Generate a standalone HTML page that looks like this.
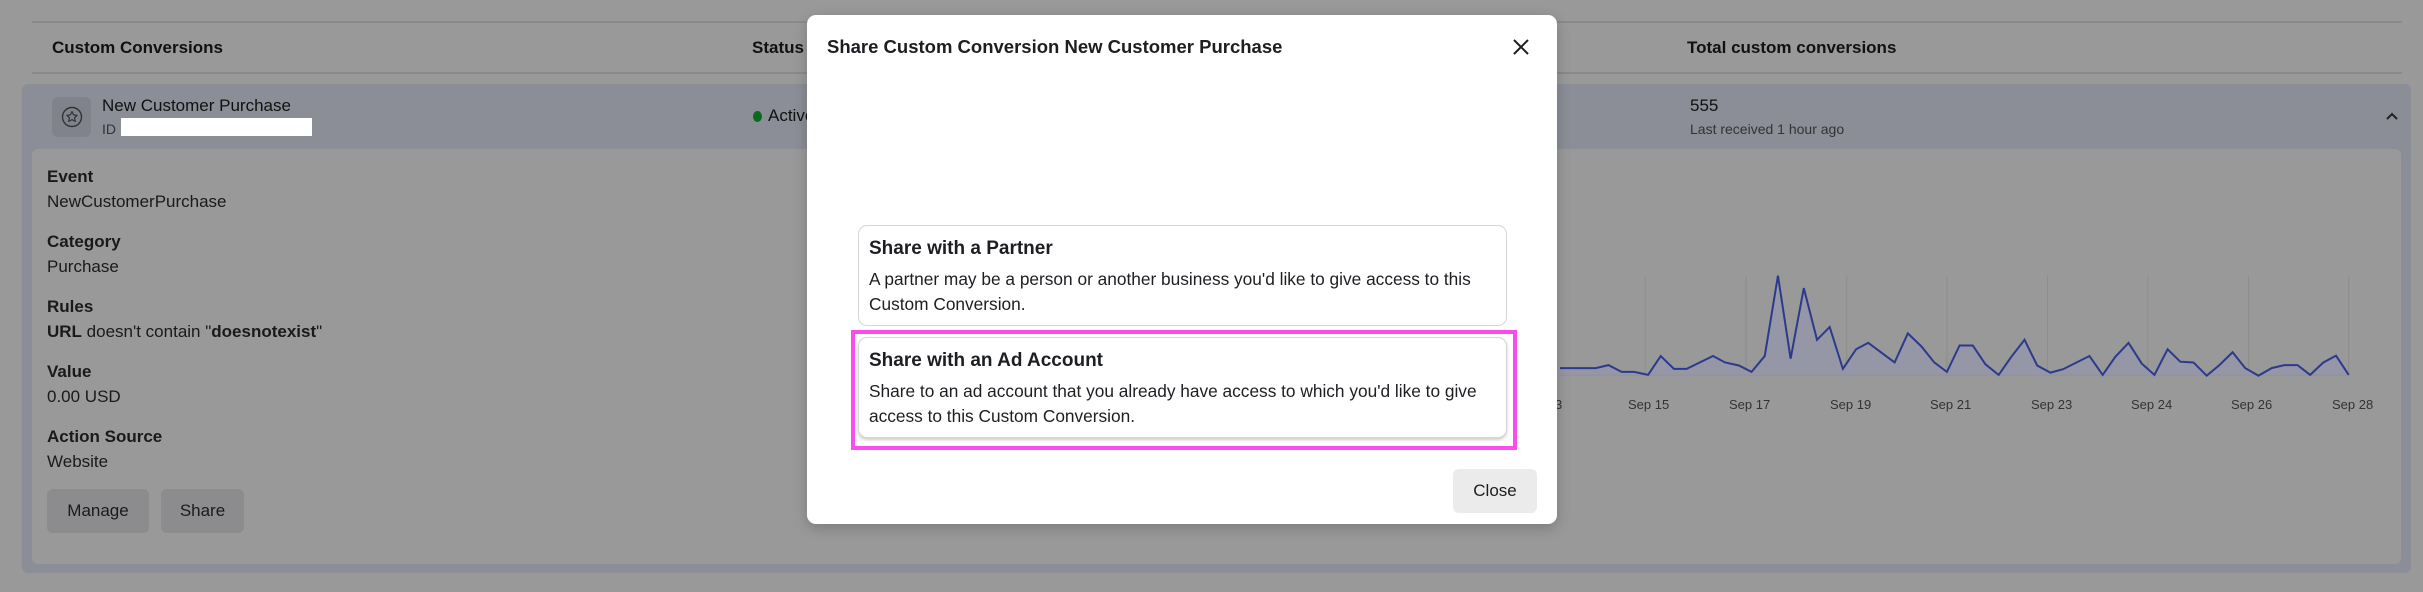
<!DOCTYPE html>
<html><head><meta charset="utf-8"><style>
*{box-sizing:border-box;margin:0;padding:0}
body{width:2423px;height:592px;background:#999;font-family:"Liberation Sans",Arial,sans-serif;position:relative;overflow:hidden;color:#111}
.a{position:absolute;white-space:nowrap}
.hl{position:absolute;left:32px;width:2370px;height:2px;background:#8a8a8a}
.th{font-weight:bold;font-size:17px;top:38px;color:#111}
.lab{font-weight:bold;font-size:17px;left:47px;color:#1a1a1a}
.val{font-size:17px;left:47px;color:#1a1a1a}
.btn{position:absolute;background:#8c8c8e;border-radius:6px;font-size:17px;text-align:center;color:#1a1a1a}
.card{position:absolute;left:858px;width:649px;height:101px;border:1px solid #d5d6d9;border-radius:9px;background:#fff;padding:0 0 0 10px}
.card h3{position:absolute;left:10px;font-size:19px;font-weight:bold;color:#1c1e21}
.card p{position:absolute;left:10px;font-size:17.3px;line-height:25px;color:#1c1e21;white-space:nowrap}
</style></head><body>
<div class="hl" style="top:21px"></div>
<div class="a th" style="left:52px">Custom Conversions</div>
<div class="a th" style="left:752px">Status</div>
<div class="a th" style="left:1687px">Total custom conversions</div>
<div class="hl" style="top:72px"></div>

<div class="a" style="left:22px;top:84px;width:2389px;height:489px;background:#8b8e97;border-radius:6px"></div>
<div class="a" style="left:32px;top:149px;width:2369px;height:415px;background:#999;border-radius:6px"></div>

<div class="a" style="left:52px;top:97px;width:39px;height:40px;background:#80838b;border-radius:6px"></div>
<svg class="a" style="left:60px;top:105px" width="24" height="24" viewBox="0 0 24 24"><circle cx="12" cy="12" r="9.5" fill="none" stroke="#333" stroke-width="1.4"/><path d="M12 6.5l1.6 3.4 3.6.4-2.7 2.5.8 3.6L12 14.6l-3.3 1.8.8-3.6-2.7-2.5 3.6-.4z" fill="none" stroke="#333" stroke-width="1.2" stroke-linejoin="round"/></svg>
<div class="a" style="left:102px;top:96px;font-size:17px">New Customer Purchase</div>
<div class="a" style="left:102px;top:121px;font-size:14px;color:#333">ID</div>
<div class="a" style="left:121px;top:118px;width:191px;height:18px;background:#fff"></div>
<div class="a" style="left:753px;top:111px;width:9px;height:11px;border-radius:50%;background:#0a6b1e"></div>
<div class="a" style="left:768px;top:106px;font-size:17px">Active</div>
<div class="a" style="left:1690px;top:96px;font-size:17px">555</div>
<div class="a" style="left:1690px;top:121px;font-size:14px;color:#333">Last received 1 hour ago</div>
<svg class="a" style="left:2385px;top:111px" width="14" height="10" viewBox="0 0 14 10"><path d="M2 8l5-5 5 5" fill="none" stroke="#222" stroke-width="2"/></svg>

<div class="a lab" style="top:167px">Event</div>
<div class="a val" style="top:192px">NewCustomerPurchase</div>
<div class="a lab" style="top:232px">Category</div>
<div class="a val" style="top:257px">Purchase</div>
<div class="a lab" style="top:297px">Rules</div>
<div class="a val" style="top:322px"><b>URL</b> doesn't contain "<b>doesnotexist</b>"</div>
<div class="a lab" style="top:362px">Value</div>
<div class="a val" style="top:387px">0.00 USD</div>
<div class="a lab" style="top:427px">Action Source</div>
<div class="a val" style="top:452px">Website</div>
<div class="btn" style="left:47px;top:489px;width:102px;height:44px;line-height:44px">Manage</div>
<div class="btn" style="left:161px;top:489px;width:83px;height:44px;line-height:44px">Share</div>

<svg class="a" style="left:1560px;top:0" width="863" height="592" viewBox="0 0 1568 1568" preserveAspectRatio="none">
<g stroke="#8d8d8d" stroke-width="1">
<line x1="155" y1="730" x2="155" y2="993" vector-effect="non-scaling-stroke"/><line x1="338" y1="730" x2="338" y2="993" vector-effect="non-scaling-stroke"/><line x1="521" y1="730" x2="521" y2="993" vector-effect="non-scaling-stroke"/><line x1="703" y1="730" x2="703" y2="993" vector-effect="non-scaling-stroke"/><line x1="886" y1="730" x2="886" y2="993" vector-effect="non-scaling-stroke"/><line x1="1068" y1="730" x2="1068" y2="993" vector-effect="non-scaling-stroke"/><line x1="1251" y1="730" x2="1251" y2="993" vector-effect="non-scaling-stroke"/><line x1="1433" y1="730" x2="1433" y2="993" vector-effect="non-scaling-stroke"/>
<line x1="0" y1="993" x2="1433" y2="993" vector-effect="non-scaling-stroke"/>
</g>
<path d="M0 975L65 975 88 967 112 985 135 985 160 993 183 943 207 977 230 977 278 943 300 960 325 968 348 985 372 943 396 730 419 950 443 763 467 900 490 866 514 977 538 925 560 908 608 960 632 883 657 918 680 960 703 985 726 915 750 915 773 965 797 993 820 945 844 900 867 968 891 987 914 978 962 943 986 993 1009 945 1033 908 1057 963 1080 993 1104 925 1127 958 1151 960 1175 995 1198 967 1222 933 1245 975 1269 995 1293 975 1316 967 1340 967 1363 993 1387 960 1410 942 1433 993L1433 993 0 993Z" fill="#9596a6" stroke="none"/>
<path d="M0 975L65 975 88 967 112 985 135 985 160 993 183 943 207 977 230 977 278 943 300 960 325 968 348 985 372 943 396 730 419 950 443 763 467 900 490 866 514 977 538 925 560 908 608 960 632 883 657 918 680 960 703 985 726 915 750 915 773 965 797 993 820 945 844 900 867 968 891 987 914 978 962 943 986 993 1009 945 1033 908 1057 963 1080 993 1104 925 1127 958 1151 960 1175 995 1198 967 1222 933 1245 975 1269 995 1293 975 1316 967 1340 967 1363 993 1387 960 1410 942 1433 993" fill="none" stroke="#2c3a8c" stroke-width="2" vector-effect="non-scaling-stroke"/>
</svg>
<div class="a" style="top:397px;left:1555px;font-size:13px;color:#333">3</div>
<div class="a" style="top:397px;left:1628px;font-size:13px;color:#333">Sep 15</div>
<div class="a" style="top:397px;left:1729px;font-size:13px;color:#333">Sep 17</div>
<div class="a" style="top:397px;left:1830px;font-size:13px;color:#333">Sep 19</div>
<div class="a" style="top:397px;left:1930px;font-size:13px;color:#333">Sep 21</div>
<div class="a" style="top:397px;left:2031px;font-size:13px;color:#333">Sep 23</div>
<div class="a" style="top:397px;left:2131px;font-size:13px;color:#333">Sep 24</div>
<div class="a" style="top:397px;left:2231px;font-size:13px;color:#333">Sep 26</div>
<div class="a" style="top:397px;left:2332px;font-size:13px;color:#333">Sep 28</div>

<div class="a" style="left:807px;top:15px;width:750px;height:509px;background:#fff;border-radius:9px;box-shadow:0 4px 14px rgba(0,0,0,.2)"></div>
<div class="a" style="left:827px;top:36px;font-size:18.5px;font-weight:bold;color:#1c1e21">Share Custom Conversion New Customer Purchase</div>
<svg class="a" style="left:1512px;top:38px" width="18" height="18" viewBox="0 0 18 18"><path d="M2 2l14 14M16 2L2 16" stroke="#1c1e21" stroke-width="2"/></svg>

<div class="card" style="top:225px"><h3 style="top:12px">Share with a Partner</h3><p style="top:41px">A partner may be a person or another business you'd like to give access to this<br>Custom Conversion.</p></div>
<div class="a" style="left:851px;top:330px;width:666px;height:120px;border:4px solid #fb4cf0"></div>
<div class="card" style="top:337px;box-shadow:0 2px 3px rgba(0,0,0,.2)"><h3 style="top:12px">Share with an Ad Account</h3><p style="top:41px">Share to an ad account that you already have access to which you'd like to give<br>access to this Custom Conversion.</p></div>
<div class="a" style="left:1453px;top:469px;width:84px;height:44px;background:#ebebeb;border-radius:6px;font-size:17px;line-height:44px;text-align:center;color:#1c1e21">Close</div>
</body></html>
